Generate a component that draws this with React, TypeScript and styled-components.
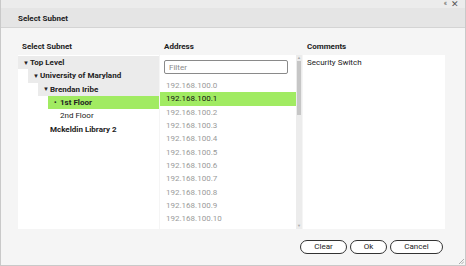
import React, { useState } from 'react';
import styled, { createGlobalStyle } from 'styled-components';

const GlobalStyle = createGlobalStyle`
  html, body {
    margin: 0;
    padding: 0;
    background: #ffffff;
  }
  * {
    box-sizing: border-box;
  }
`;

const Window = styled.div`
  width: 466px;
  height: 266px;
  display: flex;
  flex-direction: column;
  font-family: Roboto, 'Liberation Sans', sans-serif;
  font-size: 8px;
  color: #222;
  border: 1px solid #c9c9c9;
  border-top: none;
  background: #f5f5f5;
  overflow: hidden;
  position: relative;
`;

const TopStrip = styled.div`
  height: 8px;
  background: #ececec;
  display: flex;
  justify-content: flex-end;
  align-items: center;
  gap: 4px;
  padding-right: 6px;
  color: #555;
  font-size: 7px;
  line-height: 8px;
`;

const TitleBar = styled.div`
  height: 20px;
  background: #e5e5e5;
  border-bottom: 1px solid #d4d4d4;
  display: flex;
  align-items: center;
  padding: 1px 0 0 17px;
  font-weight: 700;
  font-size: 8px;
`;

const Body = styled.div`
  flex: 1;
  display: flex;
  flex-direction: column;
  padding: 14px 22px 0 17px;
`;

const Columns = styled.div`
  display: grid;
  grid-template-columns: 141px 142px 142px;
  column-gap: 1px;
`;

const Column = styled.div`
  display: flex;
  flex-direction: column;
`;

const Heading = styled.div`
  height: 13px;
  padding-left: 4px;
  font-weight: 700;
  line-height: 10px;
`;

const Panel = styled.div`
  height: 174px;
  background: #ffffff;
  overflow: hidden;
`;

const TreeList = styled(Panel)`
  padding-top: 1px;
`;

const TreeRow = styled.div<{ $depth: number; $state?: 'open' | 'selected' }>`
  height: 13.3px;
  margin-left: ${p => p.$depth * 10}px;
  display: flex;
  align-items: center;
  padding-left: ${p => (p.$state ? 5 : 12)}px;
  font-weight: 700;
  background: ${p =>
    p.$state === 'selected' ? '#a1eb62' : p.$state === 'open' ? '#ebebeb' : 'transparent'};
`;

const PlainRow = styled(TreeRow)`
  font-weight: 400;
`;

const Caret = styled.span`
  width: 7px;
  font-size: 6px;
  line-height: 8px;
`;

const Dot = styled.span`
  width: 7px;
  padding-left: 1px;
  font-size: 7px;
  line-height: 8px;
`;

const AddressPanel = styled(Panel)`
  display: flex;
`;

const AddressInner = styled.div`
  flex: 1;
  display: flex;
  flex-direction: column;
  overflow: hidden;
`;

const Filter = styled.input`
  margin: 5px 8px 5px 4px;
  height: 14px;
  flex-shrink: 0;
  border: 1px solid #8a8a8a;
  border-radius: 2px;
  padding: 0 4px;
  font-family: Roboto, 'Liberation Sans', sans-serif;
  font-size: 8px;
  line-height: 12px;
  color: #333;
  outline: none;
  &::placeholder {
    color: #8a8a8a;
  }
`;

const AddressRow = styled.div<{ $selected?: boolean }>`
  height: 13.3px;
  flex-shrink: 0;
  display: flex;
  align-items: center;
  padding-left: 6px;
  color: ${p => (p.$selected ? '#111' : '#9a9a9a')};
  background: ${p => (p.$selected ? '#a1eb62' : 'transparent')};
`;

const ScrollTrack = styled.div`
  width: 6px;
  background: #ececec;
  display: flex;
  flex-direction: column;
  align-items: center;
  justify-content: space-between;
  padding: 1px 0;
  position: relative;
`;

const ScrollThumb = styled.div`
  position: absolute;
  top: 6px;
  left: 1px;
  width: 4px;
  height: 54px;
  background: #c6c6c6;
`;

const ScrollArrow = styled.span`
  font-size: 4px;
  line-height: 4px;
  color: #aaa;
`;

const CommentPanel = styled(Panel)`
  padding: 3px 4px;
  line-height: 10px;
  color: #222;
`;

const Footer = styled.div`
  display: flex;
  justify-content: flex-end;
  gap: 3px;
  margin-top: 11px;
`;

const PillButton = styled.button<{ $w: number }>`
  width: ${p => p.$w}px;
  height: 14px;
  border: 1px solid #333;
  border-radius: 7px;
  background: #ffffff;
  font-family: Roboto, 'Liberation Sans', sans-serif;
  font-size: 8px;
  color: #222;
  padding: 0;
  line-height: 12px;
`;

const Grip = styled.svg`
  position: absolute;
  right: 1px;
  bottom: 1px;
`;

const CloseGlyph = styled.span`
  font-size: 9px;
`;

const addresses = Array.from({ length: 12 }, (_, i) => `192.168.100.${i}`);

const App = (): JSX.Element => {
  const [filter, setFilter] = useState('');
  return (
    <>
      <GlobalStyle />
      <Window>
        <TopStrip>
          <span>«</span>
          <CloseGlyph>✕</CloseGlyph>
        </TopStrip>
        <TitleBar>Select Subnet</TitleBar>
        <Body>
          <Columns>
            <Column>
              <Heading>Select Subnet</Heading>
              <TreeList>
                <TreeRow $depth={0} $state="open">
                  <Caret>▼</Caret>Top Level
                </TreeRow>
                <TreeRow $depth={1} $state="open">
                  <Caret>▼</Caret>University of Maryland
                </TreeRow>
                <TreeRow $depth={2} $state="open">
                  <Caret>▼</Caret>Brendan Iribe
                </TreeRow>
                <TreeRow $depth={3} $state="selected">
                  <Dot>•</Dot>1st Floor
                </TreeRow>
                <PlainRow $depth={3}>2nd Floor</PlainRow>
                <TreeRow $depth={2}>Mckeldin Library 2</TreeRow>
              </TreeList>
            </Column>
            <Column>
              <Heading>Address</Heading>
              <AddressPanel>
                <AddressInner>
                  <Filter
                    placeholder="Filter"
                    value={filter}
                    onChange={e => setFilter(e.target.value)}
                  />
                  {addresses
                    .filter(a => a.includes(filter))
                    .map(a => (
                      <AddressRow key={a} $selected={a === '192.168.100.1'}>
                        {a}
                      </AddressRow>
                    ))}
                </AddressInner>
                <ScrollTrack>
                  <ScrollArrow>▲</ScrollArrow>
                  <ScrollThumb />
                  <ScrollArrow>▼</ScrollArrow>
                </ScrollTrack>
              </AddressPanel>
            </Column>
            <Column>
              <Heading>Comments</Heading>
              <CommentPanel>Security Switch</CommentPanel>
            </Column>
          </Columns>
          <Footer>
            <PillButton $w={47}>Clear</PillButton>
            <PillButton $w={37}>Ok</PillButton>
            <PillButton $w={53}>Cancel</PillButton>
          </Footer>
        </Body>
        <Grip width="6" height="6" viewBox="0 0 6 6">
          <path d="M1 6 L6 1 M3.5 6 L6 3.5" stroke="#999" strokeWidth="0.8" />
        </Grip>
      </Window>
    </>
  );
};

export default App;
